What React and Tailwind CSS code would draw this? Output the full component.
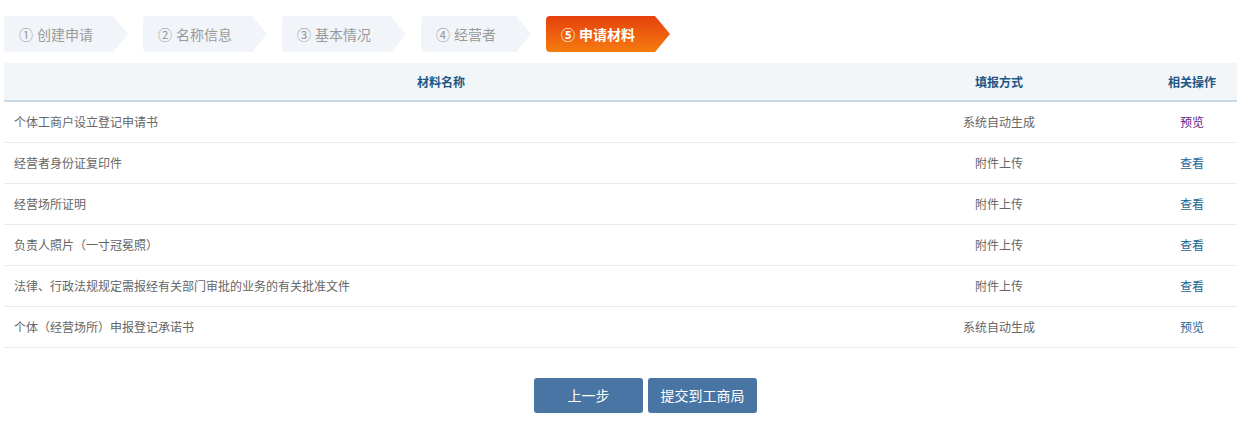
import React from "react";

const steps = [
  { no: "①", name: "创建申请" },
  { no: "②", name: "名称信息" },
  { no: "③", name: "基本情况" },
  { no: "④", name: "经营者" },
  { no: "⑤", name: "申请材料", active: true },
];

const rows = [
  { name: "个体工商户设立登记申请书", way: "系统自动生成", op: "预览", visited: true },
  { name: "经营者身份证复印件", way: "附件上传", op: "查看" },
  { name: "经营场所证明", way: "附件上传", op: "查看" },
  { name: "负责人照片（一寸冠冕照）", way: "附件上传", op: "查看" },
  { name: "法律、行政法规规定需报经有关部门审批的业务的有关批准文件", way: "附件上传", op: "查看" },
  { name: "个体（经营场所）申报登记承诺书", way: "系统自动生成", op: "预览" },
];

const Step = ({ no, name, active }) => (
  <div
    className={
      "flex h-[36px] items-center rounded-l-[4px] pl-[15px] pr-[35px] text-[14px] [clip-path:polygon(0_0,calc(100%-15px)_0,100%_50%,calc(100%-15px)_100%,0_100%)] " +
      (active
        ? "bg-[linear-gradient(180deg,#e6400d,#f57c10)] text-white font-bold"
        : "bg-[#f1f5f9] text-[#9a9a9a]")
    }
  >
    <span className="mr-[4px]">{no}</span>
    <span>{name}</span>
  </div>
);

const App = () => {
  return (
    <div className="w-[1237px] h-[428px] overflow-hidden bg-white font-['Noto_Sans_CJK_SC','Noto_Sans',sans-serif]">
      {/* Steps */}
      <div className="flex gap-[15px] pl-[4px] pt-[16px]">
        {steps.map((s) => (
          <Step key={s.no} {...s} />
        ))}
      </div>

      {/* Table */}
      <div className="ml-[4px] mt-[11px] w-[1260px]">
        <div className="flex h-[39px] items-center bg-[#f2f6f9] border-b-2 border-[#c9d8e5] text-[12px] font-bold text-[#1e5786]">
          <div className="w-[874px] text-center">材料名称</div>
          <div className="w-[242px] text-center">填报方式</div>
          <div className="w-[144px] text-center">相关操作</div>
        </div>
        {rows.map((r) => (
          <div
            key={r.name}
            className="flex h-[41px] items-center border-b border-[#e6ebf0] text-[12px] text-[#666]"
          >
            <div className="w-[874px] pl-[10px]">{r.name}</div>
            <div className="w-[242px] text-center">{r.way}</div>
            <div
              className={
                "w-[144px] text-center " +
                (r.visited ? "text-[#5c1a86]" : "text-[#1b6596]")
              }
            >
              {r.op}
            </div>
          </div>
        ))}
      </div>

      {/* Buttons */}
      <div className="mt-[30px] flex justify-center gap-[5px] pl-[54px]">
        <button className="h-[35px] w-[109px] rounded-[3px] bg-[#4875a3] text-[14px] text-white">
          上一步
        </button>
        <button className="h-[35px] w-[109px] rounded-[3px] bg-[#4875a3] text-[14px] text-white">
          提交到工商局
        </button>
      </div>
    </div>
  );
};

export default App;
